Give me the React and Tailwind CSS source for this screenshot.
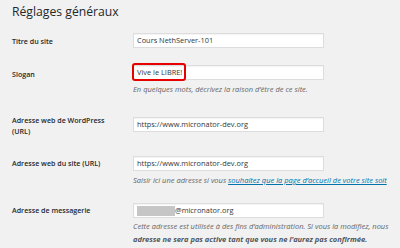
export default function App() {
  const label = "w-[121px] shrink-0 text-[7.1px] font-semibold leading-[11px] text-[#23282d]";
  const input =
    "h-[15px] w-[191px] border border-[#ddd] bg-white pl-[3px] text-[7.4px] leading-[13px] text-[#32373c] shadow-[inset_0_1px_1px_rgba(0,0,0,0.05)]";
  const desc = "text-[7.5px] italic leading-[12px] text-[#666] whitespace-nowrap";

  return (
    <div className="w-[400px] h-[248px] overflow-hidden bg-[#f1f1f1] pl-3 pt-[3px] font-['Open_Sans',sans-serif]">
      <h1 className="text-[12.2px] leading-[18px] font-normal text-[#23282d]">Réglages généraux</h1>

      {/* Titre du site */}
      <div className="mt-[12px] flex h-[15px]">
        <div className={`${label} pt-[3px]`}>Titre du site</div>
        <div className={input}>Cours NethServer-101</div>
      </div>

      {/* Slogan */}
      <div className="mt-[17px] flex h-[30px]">
        <div className={`${label} pt-[4px]`}>Slogan</div>
        <div className="flex flex-col">
          <div className="relative">
            <div className={`${input} border-[#5b9dd9] shadow-[0_0_1px_rgba(30,140,190,0.6)]`}>Vive le LIBRE!</div>
            <div className="absolute left-[-1px] top-[-2px] h-[18px] w-[54px] rounded-[3px] border-2 border-[#e60000]" />
          </div>
          <p className={`${desc} mt-[3px]`}>En quelques mots, décrivez la raison d’être de ce site.</p>
        </div>
      </div>

      {/* Adresse web de WordPress */}
      <div className="mt-[22px] flex h-[15px]">
        <div className={`${label} -mt-[2px]`}>
          Adresse web de WordPress
          <br />
          (URL)
        </div>
        <div className={input}>https://www.micronator-dev.org</div>
      </div>

      {/* Adresse web du site */}
      <div className="mt-[24px] flex h-[30px]">
        <div className={`${label} pt-[2px]`}>Adresse web du site (URL)</div>
        <div className="flex flex-col">
          <div className={input}>https://www.micronator-dev.org</div>
          <p className={`${desc} mt-[3px]`}>
            Saisir ici une adresse si vous{" "}
            <a className="text-[#0073aa] underline">souhaitez que la page d’accueil de votre site soit</a>
          </p>
        </div>
      </div>

      {/* Adresse de messagerie */}
      <div className="mt-[17px] flex">
        <div className={`${label} pt-[2px]`}>Adresse de messagerie</div>
        <div className="flex flex-col">
          <div className={`${input} flex items-center`}>
            <span className="h-[10px] w-[38px] bg-[#c6c6c6]" />
            <span>@micronator.org</span>
          </div>
          <p className={`${desc} mt-[2px] leading-[13px]`}>
            Cette adresse est utilisée à des fins d’administration. Si vous la modifiez, nous
          </p>
          <p className={`${desc} leading-[13px] font-bold text-[#50575e]`}>
            adresse ne sera pas active tant que vous ne l’aurez pas confirmée.
          </p>
        </div>
      </div>
    </div>
  );
}
